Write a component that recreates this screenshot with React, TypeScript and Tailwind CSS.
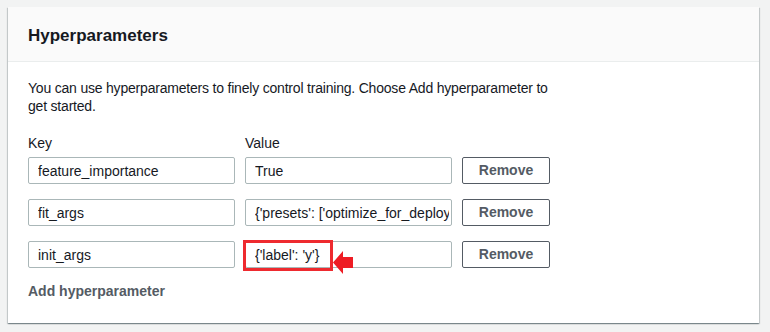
const rows = [
  { key: "feature_importance", value: "True" },
  { key: "fit_args", value: "{'presets': ['optimize_for_deployment']}" },
  { key: "init_args", value: "{'label': 'y'}", marked: true },
];

function Field({ value }: { value: string }) {
  return (
    <input
      readOnly
      value={value}
      className="h-[27px] w-[207px] rounded-[2px] border border-[#aab7b8] bg-white pl-[9px] pr-[2px] text-[14px] text-[#16191f] outline-none"
    />
  );
}

export default function App() {
  return (
    <div
      className="h-[332px] w-[770px] bg-[#f2f3f3] pl-[8px] pt-[7px]"
      style={{ fontFamily: '"Liberation Sans", Arial, sans-serif' }}
    >
      <div className="flex h-[316px] w-[751px] flex-col bg-white shadow-[0_1px_1px_0_rgba(0,28,36,0.3),1px_1px_1px_0_rgba(0,28,36,0.15),-1px_1px_1px_0_rgba(0,28,36,0.15)]">
        <div className="flex h-[55px] items-center border-b border-[#eaeded] bg-[#fafafa] px-[20px] pt-[4px]">
          <h2 className="text-[17px] font-bold text-[#16191f]">Hyperparameters</h2>
        </div>

        <div className="flex flex-col px-[20px] pt-[17px]">
          <p className="max-w-[530px] text-[14px] leading-[18px] tracking-[-0.2px] text-[#16191f]">
            You can use hyperparameters to finely control training. Choose Add hyperparameter to get started.
          </p>

          <div className="mt-[18px] flex gap-[10px] text-[14px] leading-[20px] text-[#16191f]">
            <span className="w-[207px]">Key</span>
            <span>Value</span>
          </div>

          <div className="mt-[4px] flex flex-col gap-[15px]">
            {rows.map((row) => (
              <div key={row.key} className="flex gap-[10px]">
                <Field value={row.key} />
                <div className="relative">
                  <Field value={row.value} />
                  {row.marked && (
                    <>
                      <div className="absolute left-[-2px] top-[-1px] h-[31px] w-[90px] border-[3px] border-[#ee2a2f]" />
                      <svg
                        className="absolute left-[88px] top-[10px]"
                        width="20"
                        height="23"
                        viewBox="0 0 20 23"
                      >
                        <path d="M0 11.5 L10 0 L10 6 L20 6 L20 17 L10 17 L10 23 Z" fill="#ee1c24" />
                      </svg>
                    </>
                  )}
                </div>
                <button className="flex h-[27px] w-[88px] items-center justify-center rounded-[2px] border border-[#545b64] bg-white text-[14px] font-bold text-[#545b64]">
                  Remove
                </button>
              </div>
            ))}
          </div>

          <button className="mt-[13px] self-start text-[14px] font-bold leading-[20px] text-[#545b64]">
            Add hyperparameter
          </button>
        </div>
      </div>
    </div>
  );
}
